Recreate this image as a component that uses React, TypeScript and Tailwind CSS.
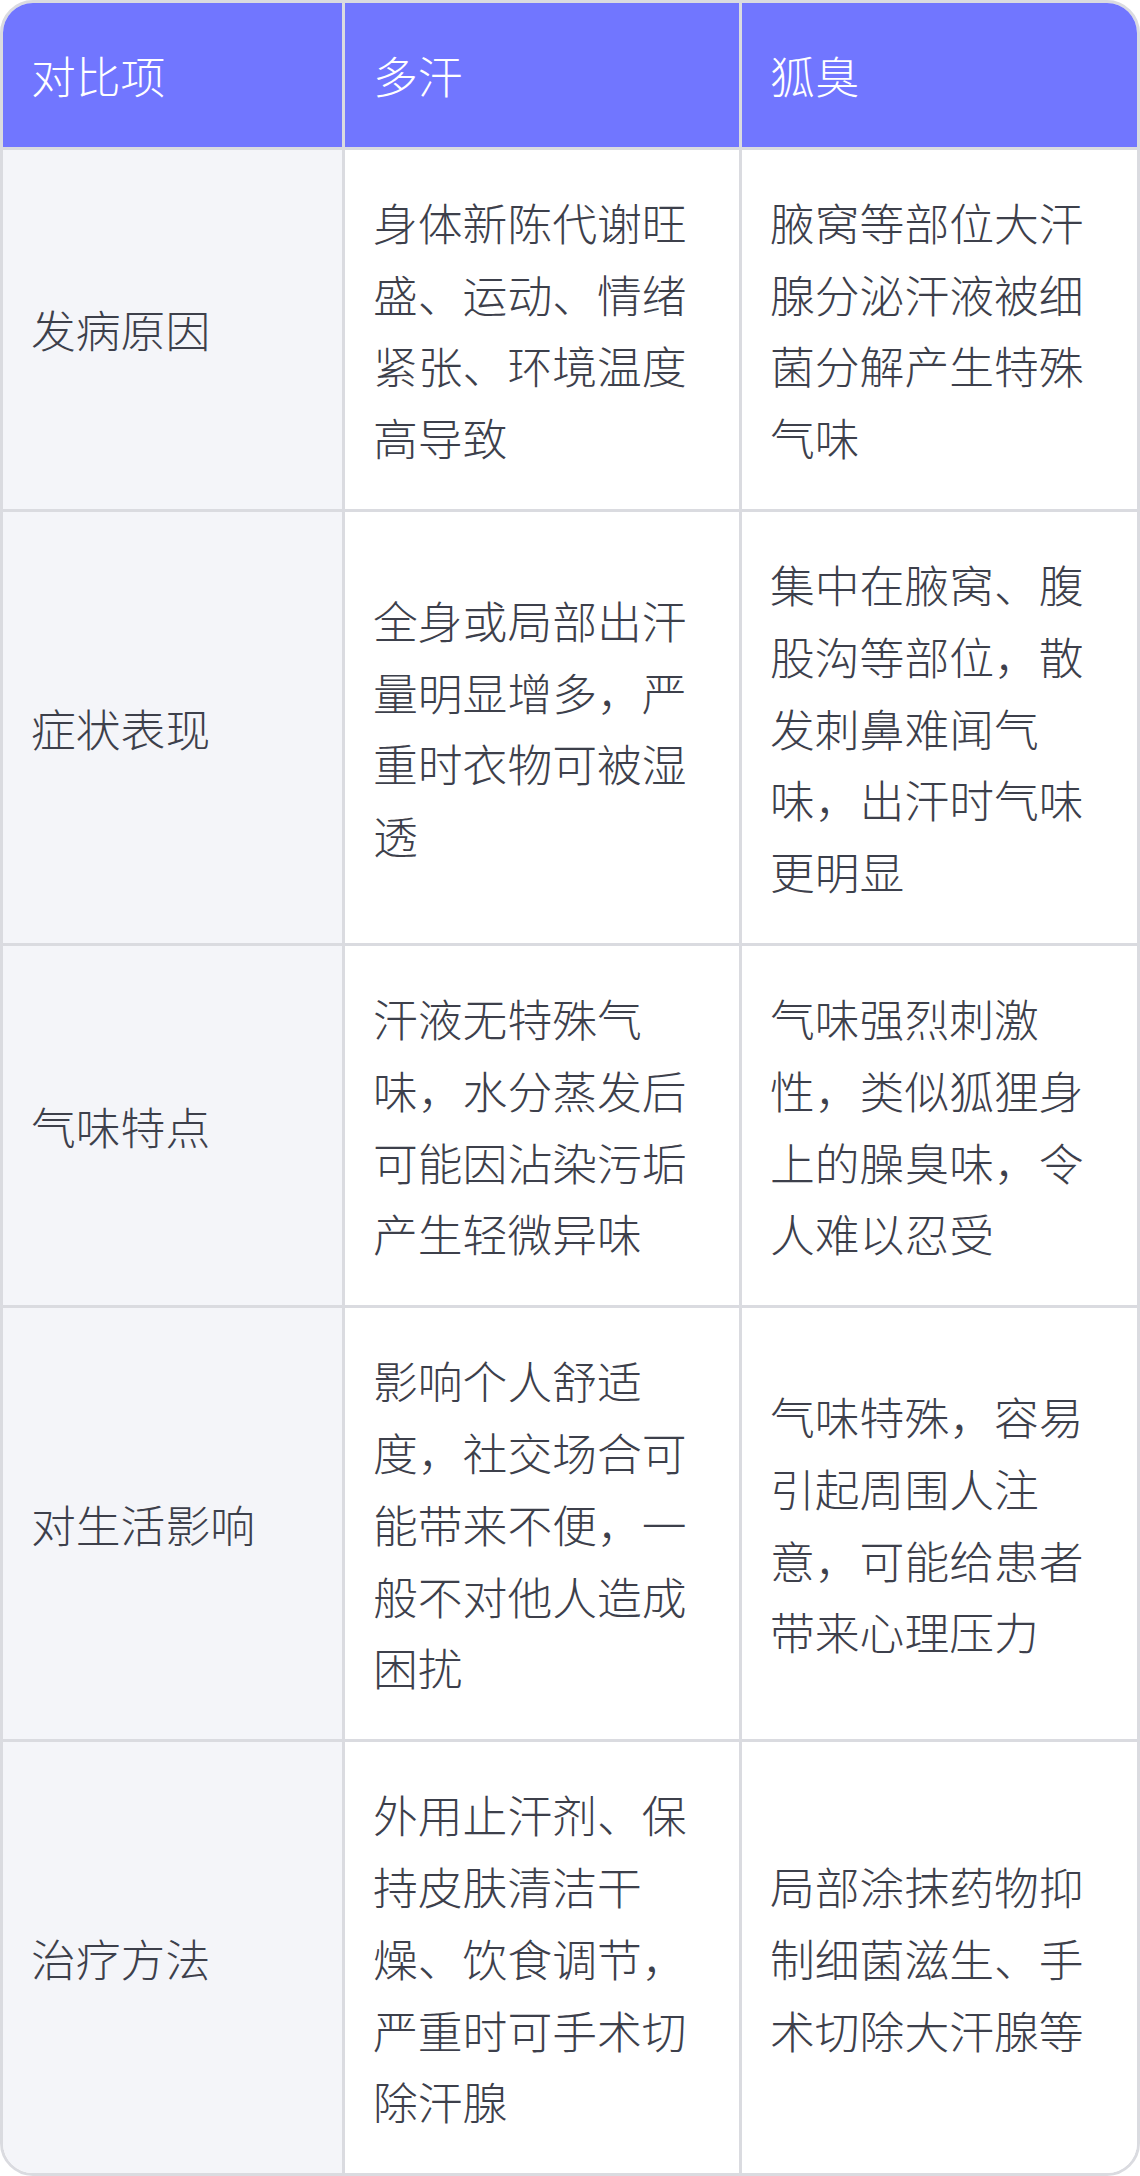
export default function App() {
  // 多汗 vs 狐臭 comparison table
  const headers = ["对比项", "多汗", "狐臭"];
  const rows = [
    {
      item: "发病原因",
      sweat: "身体新陈代谢旺盛、运动、情绪紧张、环境温度高导致",
      odor: "腋窝等部位大汗腺分泌汗液被细菌分解产生特殊气味",
    },
    {
      item: "症状表现",
      sweat: "全身或局部出汗量明显增多，严重时衣物可被湿透",
      odor: "集中在腋窝、腹股沟等部位，散发刺鼻难闻气味，出汗时气味更明显",
    },
    {
      item: "气味特点",
      sweat: "汗液无特殊气味，水分蒸发后可能因沾染污垢产生轻微异味",
      odor: "气味强烈刺激性，类似狐狸身上的臊臭味，令人难以忍受",
    },
    {
      item: "对生活影响",
      sweat: "影响个人舒适度，社交场合可能带来不便，一般不对他人造成困扰",
      odor: "气味特殊，容易引起周围人注意，可能给患者带来心理压力",
    },
    {
      item: "治疗方法",
      sweat: "外用止汗剂、保持皮肤清洁干燥、饮食调节，严重时可手术切除汗腺",
      odor: "局部涂抹药物抑制细菌滋生、手术切除大汗腺等",
    },
  ];

  const cell = "flex items-center px-[28px] py-[36px] border-[#dadbe0]";

  return (
    <main
      className="w-[1140px] bg-white text-[44.8px] leading-[71.8px] font-light"
      style={{ fontFamily: '"Noto Sans CJK SC", "Noto Sans", sans-serif' }}
    >
      <div className="rounded-[33px] border-[3px] border-[#dadbe0] overflow-hidden">
        <div className="grid grid-cols-[342px_397px_1fr]">
          {/* Header */}
          {headers.map((h, i) => (
            <div
              key={h}
              className={`${cell} bg-[#7176ff] text-white border-b-[3px] ${
                i < 2 ? "border-r-[3px]" : ""
              }`}
            >
              {h}
            </div>
          ))}

          {/* Body */}
          {rows.map((row, index) => {
            const last = index === rows.length - 1;
            return [
              <div
                key={row.item + "-a"}
                className={`${cell} bg-[#f4f5f9] text-[#3d404b] border-r-[3px] ${
                  last ? "" : "border-b-[3px]"
                }`}
              >
                {row.item}
              </div>,
              <div
                key={row.item + "-b"}
                className={`${cell} bg-white text-[#3d404b] border-r-[3px] ${
                  last ? "" : "border-b-[3px]"
                }`}
              >
                {row.sweat}
              </div>,
              <div
                key={row.item + "-c"}
                className={`${cell} bg-white text-[#3d404b] ${
                  last ? "" : "border-b-[3px]"
                }`}
              >
                {row.odor}
              </div>,
            ];
          })}
        </div>
      </div>
    </main>
  );
}
